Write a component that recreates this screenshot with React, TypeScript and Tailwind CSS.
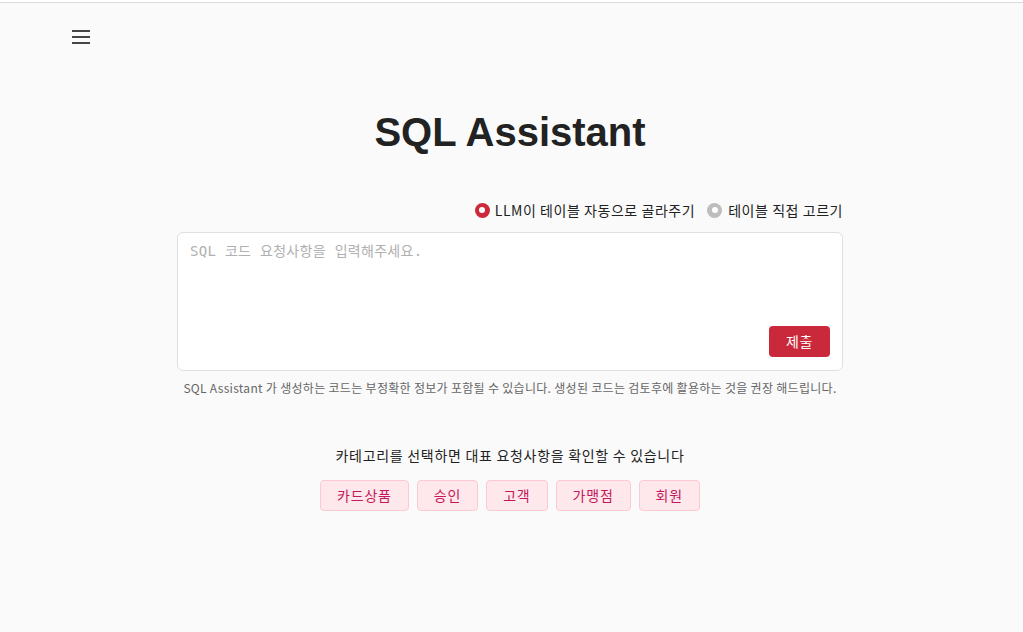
import React from "react";

const KR = { fontFamily: '"Noto Sans CJK KR", "Noto Sans", sans-serif' };

export default function App() {
  const cats = ["카드상품", "승인", "고객", "가맹점", "회원"];
  return (
    <div className="min-h-[632px] w-full bg-[#fafafa]" style={KR}>
      <div className="h-[2px] bg-white" />
      <div className="h-px bg-[#dcdcdc]" />
      <div className="pl-[72px] pt-[27px]">
        <button className="flex h-[14px] w-[18px] flex-col justify-between">
          <span className="block h-[2px] w-[18px] bg-[#444]" />
          <span className="block h-[2px] w-[18px] bg-[#444]" />
          <span className="block h-[2px] w-[18px] bg-[#444]" />
        </button>
      </div>
      <div className="w-[1020px]">
        <div className="mx-auto mt-[64px] flex w-[666px] flex-col items-center">
          <h1
            className="text-[40px] font-bold leading-[48px] text-[#222]"
            style={{ fontFamily: '"Liberation Sans", Arial, sans-serif' }}
          >
            SQL Assistant
          </h1>
          <div className="mt-[44px] flex w-full items-center justify-end gap-[12px] text-[14px] leading-[20px] tracking-[0.55px] text-[#222]">
            <label className="flex items-center gap-[5px]">
              <span className="flex h-[15px] w-[15px] items-center justify-center rounded-full bg-[#cc2a3a]">
                <span className="h-[6px] w-[6px] rounded-full bg-white" />
              </span>
              <span>LLM이 테이블 자동으로 골라주기</span>
            </label>
            <label className="flex items-center gap-[6px]">
              <span className="flex h-[15px] w-[15px] items-center justify-center rounded-full bg-[#bdbdbd]">
                <span className="h-[6px] w-[6px] rounded-full bg-white" />
              </span>
              <span>테이블 직접 고르기</span>
            </label>
          </div>
          <div className="mt-[12px] flex h-[139px] w-full flex-col justify-between rounded-[6px] border border-[#e0e0e0] bg-white px-[12px] pb-[13px] pt-[8px]">
            <div
              className="text-[14px] leading-[20px] tracking-[0.3px] text-[#b0b0b0]"
              style={{ fontFamily: '"DejaVu Sans Mono", "Noto Sans CJK KR", monospace' }}
            >
              SQL 코드 요청사항을 입력해주세요.
            </div>
            <div className="flex justify-end">
              <button className="h-[31px] w-[61px] rounded-[4px] bg-[#c9293a] text-[14px] tracking-[0.5px] text-white">
                제출
              </button>
            </div>
          </div>
          <p className="mt-[8px] whitespace-nowrap text-[12px] leading-[18px] tracking-[0.3px] text-[#666]">
            SQL Assistant 가 생성하는 코드는 부정확한 정보가 포함될 수 있습니다. 생성된 코드는 검토후에 활용하는 것을 권장 해드립니다.
          </p>
          <p className="mt-[48px] text-[14px] leading-[20px] tracking-[0.7px] text-[#222]">
            카테고리를 선택하면 대표 요청사항을 확인할 수 있습니다
          </p>
          <div className="mt-[15px] flex gap-[8px]">
            {cats.map((c) => (
              <button
                key={c}
                className="h-[31px] rounded-[4px] border border-[#fdc9d2] bg-[#ffe8ec] px-[16px] text-[14px] tracking-[0.8px] text-[#c2185b]"
              >
                {c}
              </button>
            ))}
          </div>
        </div>
      </div>
    </div>
  );
}
